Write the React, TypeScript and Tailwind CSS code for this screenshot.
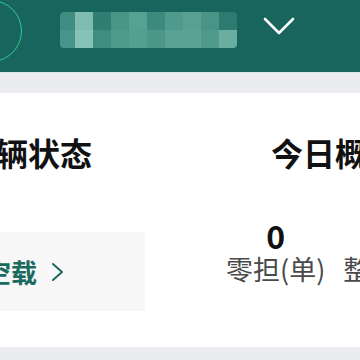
import React from "react";

const mosaic: string[][] = [
  ["#3f8c80", "#7fbcb0", "#2e7e72", "#4b9488", "#56a094", "#3c8a7e", "#4f998d", "#59a195", "#4a9387", "#2d7b70"],
  ["#4a958a", "#86c2b6", "#3f8c80", "#4f988c", "#559e92", "#4c968a", "#5aa296", "#5ba397", "#4f998d", "#6aada1"],
];

export default function App() {
  return (
    <div
      className="w-[360px] h-[360px] overflow-hidden bg-[#ebecf0] flex flex-col"
      style={{ fontFamily: '"Noto Sans CJK SC", "Noto Sans", sans-serif' }}
    >
      {/* header */}
      <div className="h-[73px] shrink-0 bg-[#17655c] border-b border-[#d9e8e5] flex items-start overflow-hidden">
        <div className="ml-[-40px] mt-[0px] w-[62px] h-[62px] shrink-0 rounded-full border-[1.5px] border-[#2ecc8f]" />
        <div className="ml-[38px] mt-[12px] flex flex-col blur-[0.6px] rounded-[4px] overflow-hidden">
          {mosaic.map((row, r) => (
            <div key={r} className="flex">
              {row.map((c, i) => (
                <div
                  key={i}
                  className={i === 0 ? "w-[15px] h-[18px]" : "w-[18px] h-[18px]"}
                  style={{ backgroundColor: c }}
                />
              ))}
            </div>
          ))}
        </div>
        <svg className="ml-[25px] mt-[16px] shrink-0" width="34" height="20" viewBox="0 0 34 20" fill="none">
          <polyline points="3,3 17,17 31,3" stroke="white" strokeWidth="2.6" strokeLinecap="round" strokeLinejoin="round" />
        </svg>
      </div>

      {/* gap */}
      <div className="h-[20px] shrink-0" />

      {/* card */}
      <div className="h-[254px] shrink-0 bg-white flex overflow-hidden">
        <div className="ml-[-36px] w-[307px] shrink-0 flex flex-col">
          <div className="mt-[43px] text-[32px] leading-[32px] font-bold text-[#111] whitespace-nowrap">车辆状态</div>
          <div className="mt-[64px] w-[181px] h-[79px] bg-[#f7f7f8] flex items-center pl-[21px]">
            <span className="text-[26px] leading-[30px] font-bold text-[#1b6a60] whitespace-nowrap">空载</span>
            <svg className="ml-[14px]" width="14" height="20" viewBox="0 0 14 20" fill="none">
              <polyline points="2,2 11,10 2,18" stroke="#1b6a60" strokeWidth="2" strokeLinecap="round" strokeLinejoin="round" />
            </svg>
          </div>
        </div>
        <div className="flex flex-col shrink-0">
          <div className="mt-[43px] text-[32px] leading-[32px] font-bold text-[#111] whitespace-nowrap">今日概况</div>
          <div className="mt-[51px] flex items-start ml-[-45px]">
            <div className="flex flex-col items-center">
              <div className="text-[32px] leading-[32px] font-bold text-[#111]">0</div>
              <div className="mt-[2px] text-[27px] leading-[32px] text-[#4a4a4a] whitespace-nowrap">零担(单)</div>
            </div>
            <div className="ml-[18px] flex flex-col items-center">
              <div className="text-[32px] leading-[32px] font-bold text-[#111]">0</div>
              <div className="mt-[2px] text-[27px] leading-[32px] text-[#4a4a4a] whitespace-nowrap">整车(单)</div>
            </div>
          </div>
        </div>
      </div>
    </div>
  );
}
